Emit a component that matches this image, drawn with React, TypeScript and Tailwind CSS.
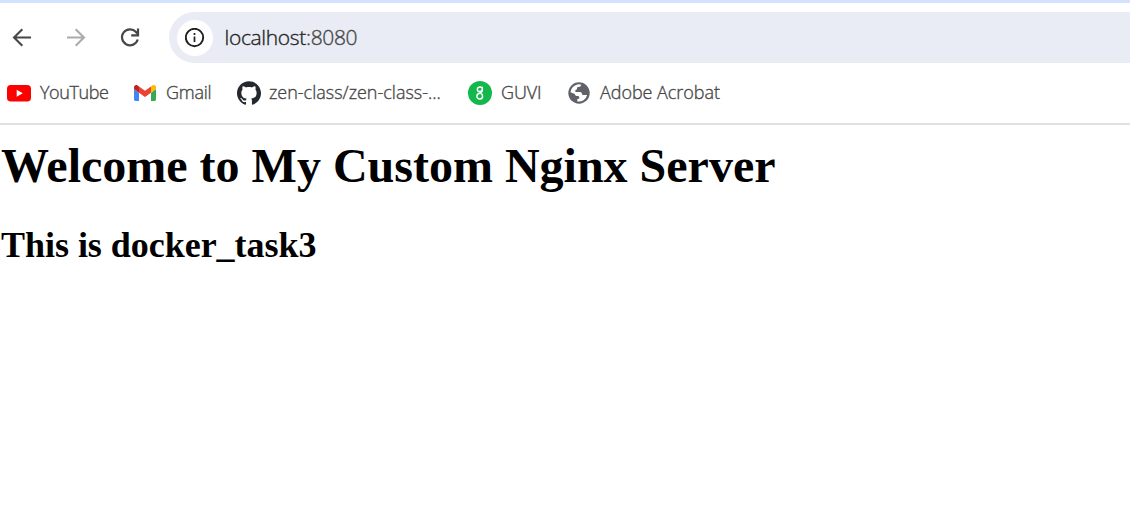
import type { ReactNode } from "react";
import { SiGithub } from "react-icons/si";

function BackIcon() {
  return (
    <svg className="h-5 w-5" viewBox="0 0 20 20" fill="none" stroke="#474747" strokeWidth="2.1">
      <path d="M19 9.5H2.5M10.3 1.2L2 9.5l8.3 8.3" />
    </svg>
  );
}

function ForwardIcon() {
  return (
    <svg className="h-5 w-5" viewBox="0 0 20 20" fill="none" stroke="#ababab" strokeWidth="2.1">
      <path d="M1 9.5h16.5M9.7 1.2L18 9.5l-8.3 8.3" />
    </svg>
  );
}

function ReloadIcon() {
  return (
    <svg className="h-5 w-5" viewBox="0 0 20 20" fill="none" stroke="#474747" strokeWidth="2.2">
      <path d="M17.7 11.5A8 8 0 1 1 16 4L17.6 5.9" />
      <path d="M18 .5v6.8h-6.8" />
    </svg>
  );
}

function InfoIcon() {
  return (
    <svg className="h-5 w-5" viewBox="0 0 20 20" fill="none" stroke="#1f1f1f">
      <circle cx="9.5" cy="9.5" r="8.7" strokeWidth="1.9" />
      <path d="M9.5 8.6v5.5M9.5 5v2" strokeWidth="1.7" />
    </svg>
  );
}

function YouTubeIcon() {
  return (
    <svg className="h-6 w-6" viewBox="0 0 24 24">
      <rect x="0" y="4" width="24" height="16.5" rx="3.8" fill="#f00" />
      <path d="M9.7 8.8v6.9l6.1-3.45z" fill="#fff" />
    </svg>
  );
}

function GmailIcon() {
  return (
    <svg className="h-4 w-[22px]" viewBox="52 42 88 66" preserveAspectRatio="none">
      <path fill="#4285f4" d="M58 108h14V74L52 59v43c0 3.32 2.69 6 6 6" />
      <path fill="#34a853" d="M120 108h14c3.32 0 6-2.69 6-6V59l-20 15" />
      <path fill="#fbbc04" d="M120 48v26l20-15v-8c0-7.42-8.47-11.65-14.4-7.2" />
      <path fill="#ea4335" d="M72 74V48l24 18 24-18v26L96 92" />
      <path fill="#c5221f" d="M52 51v8l20 15V48l-5.6-4.2c-5.94-4.45-14.4-.22-14.4 7.2" />
    </svg>
  );
}

function GuviIcon() {
  return (
    <svg className="h-6 w-6" viewBox="0 0 24 24" fill="none">
      <circle cx="12" cy="12" r="12" fill="#12b84b" />
      <g stroke="#fff" strokeWidth="1.5" strokeLinecap="round" strokeLinejoin="round">
        <path d="M13.9 6.5c-2-1-4.6-.3-4.6 1.9 0 2.4 3.3 2.8 4.5.9" />
        <path d="M14.3 6.4v3.4c0 1.3-.9 1.8-2.3 2.1-2 .5-3.1 1.5-3.1 3.3a2.8 2.8 0 0 0 5.7 0c0-1.4-.7-2.3-1.9-2.8" />
      </g>
    </svg>
  );
}

function GlobeIcon() {
  return (
    <svg className="h-[22px] w-[22px]" viewBox="0 0 22 22">
      <circle cx="11" cy="11" r="10.7" fill="#5f6368" />
      <path
        fill="#fff"
        d="M13.3 2.7c-.4 1.3-.9 2-2.2 2.1-1.6.1-2.2.7-2.1 1.8.1.9-.5 1.3-1.6 1.3v2h4.4c1.5 0 2.2.8 2.2 2.1 0 .8.6 1.1 1.8 1.1h3.4A8.6 8.6 0 0 1 9.3 19.4v-2.3c1.3 0 2-.5 2-1.5 0-1.1-.6-1.6-1.8-1.6-1.7 0-2.5-.7-2.7-2.1L2.5 10.2A8.6 8.6 0 0 1 13.3 2.7z"
      />
    </svg>
  );
}

function Bookmark({ icon, className, children }: { icon: ReactNode; className: string; children: string }) {
  return (
    <a className={`flex shrink-0 items-center whitespace-nowrap ${className}`}>
      {icon}
      <span className="pb-[2px]">{children}</span>
    </a>
  );
}

export default function App() {
  return (
    <div className="flex h-[531px] w-full flex-col overflow-hidden bg-white">
      <header className="flex h-[125px] shrink-0 flex-col border-b-2 border-[#e1e1e1] border-t-[3px] border-t-[#d3e3fd] font-['Open_Sans',sans-serif] font-light [-webkit-text-stroke:0.35px]">
        <div className="mt-[9px] flex h-[51px] items-center pl-3">
          <div className="flex w-[157px] shrink-0 gap-[34px]">
            <BackIcon />
            <ForwardIcon />
            <ReloadIcon />
          </div>
          <div className="flex h-[51px] flex-1 items-center rounded-l-full bg-[#e9ecf4] pl-2">
            <div className="flex h-9 w-9 items-center justify-center rounded-full bg-white">
              <InfoIcon />
            </div>
            <span className="ml-[11.5px] pb-[2px] text-[21px] leading-6 tracking-[-0.33px] text-[#1f1f1f]">
              localhost<span className="text-[#474747]">:8080</span>
            </span>
          </div>
        </div>
        <nav className="mt-[15px] flex h-[30px] items-center pl-[7px] text-[18px] leading-6 text-[#474747]">
          <Bookmark className="w-[127px] gap-[9px] tracking-[-0.4px]" icon={<YouTubeIcon />}>YouTube</Bookmark>
          <Bookmark className="w-[103px] gap-[10px] tracking-[-0.25px]" icon={<GmailIcon />}>Gmail</Bookmark>
          <Bookmark className="w-[231px] gap-2" icon={<SiGithub className="h-6 w-6 text-[#24292f]" />}>
            zen-class/zen-class-...
          </Bookmark>
          <Bookmark className="w-[100px] gap-[9px] tracking-[-0.1px]" icon={<GuviIcon />}>GUVI</Bookmark>
          <Bookmark className="gap-[10px] tracking-[-0.05px]" icon={<GlobeIcon />}>Adobe Acrobat</Bookmark>
        </nav>
      </header>
      <main className="flex flex-col pl-px pt-[13px] font-['Liberation_Serif',serif] font-bold text-black">
        <h1 className="text-[48px] leading-[55px]">Welcome to My Custom Nginx Server</h1>
        <h2 className="mt-8 text-[36px] leading-[41px] tracking-[-0.03px]">This is docker_task3</h2>
      </main>
    </div>
  );
}
